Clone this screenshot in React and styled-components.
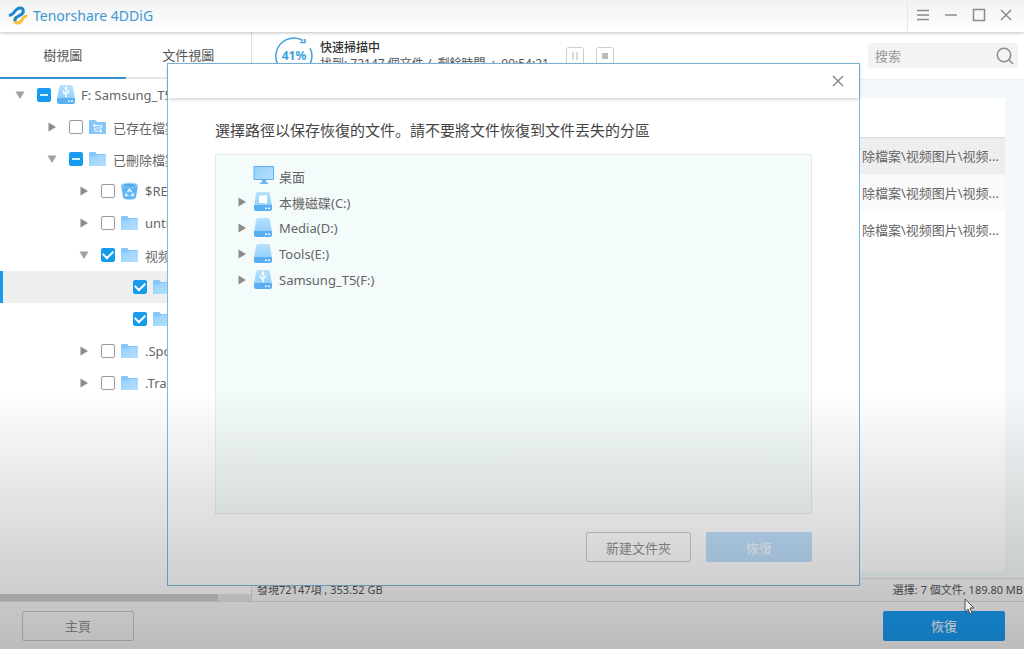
// App.jsx
import React from 'react';
import styled, { createGlobalStyle } from 'styled-components';

const GlobalStyle = createGlobalStyle`
  * {
    box-sizing: border-box;
  }

  body {
    margin: 0;
    overflow: hidden;
    background: #fff;
  }

  body, button, input, table {
    font-family: 'Noto Sans', 'Noto Sans CJK SC', 'Noto Sans CJK TC', sans-serif;
    font-size: 13px;
    color: #666;
  }

  button {
    cursor: pointer;
  }
`;

const Window = styled.div`
  display: grid;
  grid-template-columns: 252px 1fr;
  grid-template-rows: 32px 1fr 48px;
  height: 100vh;
`;

const TitleBar = styled.header`
  grid-column: 1 / -1;
  display: flex;
  align-items: center;
  justify-content: space-between;
  padding-left: 8px;
  background: linear-gradient(#f2f2f2, #fff);
  box-shadow: 0 1px 3px rgba(0, 0, 0, 0.25);
  z-index: 1;
`;

const Brand = styled.div`
  display: flex;
  align-items: center;
  gap: 5px;
  font-size: 14px;
  line-height: 30px;
  color: #3d97d3;
`;

const WindowControls = styled.div`
  display: flex;
  align-items: center;
  gap: 14px;
  height: 32px;
  padding: 0 12px 2px 8px;
  border-left: 1px solid #e8e8e8;
`;

const IconButton = styled.button`
  display: flex;
  padding: 0;
  border: 0;
  background: none;
`;

const Sidebar = styled.aside`
  display: flex;
  flex-direction: column;
  min-width: 0;
  border-right: 1px solid #ddd;
`;

const Tabs = styled.nav`
  display: flex;
`;

const Tab = styled.button`
  flex: 1;
  height: 47px;
  padding: 0;
  border: 0;
  border-bottom: 2px solid ${props => (props.$active ? '#3592d0' : '#e6e6e6')};
  background: none;
  color: #555;
`;

const Tree = styled.ul`
  flex: 1;
  margin: 0;
  padding: 0;
  list-style: none;
  overflow: hidden;
`;

const TreeRow = styled.li`
  display: flex;
  align-items: center;
  height: 32px;
  padding-left: ${props => props.$level * 32 + 12}px;
  border-left: 3px solid ${props => (props.$selected ? '#169bee' : 'transparent')};
  background: ${props => (props.$selected ? '#efefef' : 'none')};
`;

const ArrowButton = styled(IconButton)`
  width: 10px;
  margin-right: 12px;
  visibility: ${props => (props.$hidden ? 'hidden' : 'visible')};
`;

const NodeLabel = styled.label`
  display: flex;
  align-items: center;
  gap: 5px;
  white-space: nowrap;
`;

const Checkbox = styled.input`
  appearance: none;
  display: grid;
  place-items: center;
  width: 14px;
  height: 14px;
  margin: 0;
  border: 1px solid #999;
  border-radius: 2px;
  background: #fff;

  &:checked, &:indeterminate {
    border-color: #169bee;
    background: #169bee;
  }

  &:checked::after {
    content: '';
    width: 8px;
    height: 5px;
    margin-bottom: 3px;
    border: solid #fff;
    border-width: 0 0 2px 2px;
    transform: rotate(-45deg);
  }

  &:indeterminate::after {
    content: '';
    width: 8px;
    height: 2px;
    background: #d8effd;
  }
`;

const ScrollTrack = styled.div`
  height: 7px;
  background: #e8e8e8;
`;

const ScrollThumb = styled.div`
  width: 87%;
  height: 100%;
  background: #cecece;
`;

const Main = styled.main`
  display: flex;
  flex-direction: column;
  min-width: 0;
`;

const ScanBar = styled.div`
  display: flex;
  align-items: center;
  height: 48px;
  padding: 0 6px 0 22px;
  border-bottom: 1px solid #eee;
`;

const ScanText = styled.div`
  width: 232px;
  margin-left: 7px;
  padding-top: 1px;
  font-size: 12px;
  line-height: 16px;
  white-space: nowrap;
  color: #555;
`;

const ScanTitle = styled.div`
  font-weight: 500;
  color: #333;
`;

const ScanActions = styled.div`
  display: flex;
  gap: 12px;
  margin-left: 14px;
`;

const SearchBox = styled.label`
  display: flex;
  align-items: center;
  width: 150px;
  height: 25px;
  margin-left: auto;
  padding: 0 4px 0 7px;
  border-radius: 3px;
  background: #f3f3f3;
`;

const SearchInput = styled.input`
  flex: 1;
  min-width: 0;
  padding: 0;
  border: 0;
  outline: 0;
  background: none;

  &::placeholder {
    color: #999;
    opacity: 1;
  }
`;

const Content = styled.section`
  flex: 1;
  display: flex;
  padding: 18px 19px 7px;
  background: #f3f9fa;
`;

const FileCard = styled.div`
  flex: 1;
  background: #fff;
  border-radius: 2px;
`;

const FileTable = styled.table`
  width: 100%;
  border-collapse: collapse;
`;

const HeadCell = styled.th`
  height: 39px;
  padding: 0;
  border-bottom: 1px solid #ddd;
`;

const FileRow = styled.tr`
  background: ${props => props.$bg};
`;

const PathCell = styled.td`
  height: 37px;
  padding: 0 6px;
  text-align: right;
`;

const StatusBar = styled.div`
  display: flex;
  justify-content: space-between;
  padding: 0 1px 0 5px;
  border-top: 1px solid #e4e4e4;
  background: #f8f8f8;
  font-size: 11px;
  line-height: 22px;
  color: #555;
`;

const Footer = styled.footer`
  grid-column: 1 / -1;
  display: flex;
  align-items: center;
  justify-content: space-between;
  padding: 0 19px 0 22px;
  border-top: 1px solid #e0e0e0;
  background: #fbfbfb;
`;

const Button = styled.button`
  width: ${props => props.$width}px;
  height: 30px;
  padding: 0;
  border: 1px solid #ccc;
  border-radius: 2px;
  background: none;
  color: #909090;
`;

const PrimaryButton = styled(Button)`
  border: 0;
  background: #1b9ff8;
  color: #fff;

  &:disabled {
    background: #bfe0fd;
    color: #f4f9fd;
  }
`;

const Backdrop = styled.div`
  position: fixed;
  inset: 0;
  display: grid;
  place-items: center;
  padding-left: 3px;
  z-index: 2;
`;

const Dialog = styled.div`
  width: 100%;
  max-width: 693px;
  border: 1px solid #7fb9df;
  background: #fff;
`;

const DialogHeader = styled.div`
  display: flex;
  align-items: center;
  justify-content: flex-end;
  height: 34px;
  padding: 0 15px;
  box-shadow: 0 1px 4px rgba(0, 0, 0, 0.22);
`;

const DialogBody = styled.div`
  padding: 20px 47px 23px;
`;

const Message = styled.p`
  margin: 0 0 12px;
  font-size: 15px;
  line-height: 24px;
  color: #444;
`;

const DriveList = styled.ul`
  height: 360px;
  margin: 0;
  padding: 8px 21px;
  border: 1px solid #e3ebec;
  background: #f4fbfb;
  list-style: none;
`;

const DriveRow = styled.li`
  display: flex;
  align-items: center;
  gap: 6px;
  height: 26px;

  ${ArrowButton} {
    margin: 0;
  }
`;

const DialogActions = styled.div`
  display: flex;
  justify-content: flex-end;
  gap: 15px;
  margin-top: 18px;
`;

const Shade = styled.div`
  position: fixed;
  inset: 60% 0 0;
  background: linear-gradient(rgba(0, 0, 0, 0), rgba(0, 0, 0, 0.25));
  pointer-events: none;
  z-index: 3;
`;

const Pointer = styled.svg`
  position: fixed;
  right: 48px;
  bottom: 33px;
  z-index: 4;
`;

const Logo = () => (
  <svg width="20" height="20" viewBox="0 0 20 20" fill="none" strokeWidth="3">
    <path d="M8 11c-3 3-1 6 2 6 4 0 4-5 6-6q2-1 3-1" stroke="#f6bf35" />
    <path d="M1 9.500c2-.5 3-1 4-2C7 5 9 2 12 2c4 0 4 4 2 6l-5 3c-2 1-2 2-2 4" stroke="#1b86d2" />
  </svg>
);

const Arrow = ({ open }) => (
  <svg width="10" height="10" viewBox="0 0 10 10" fill={open ? '#a0a0a0' : '#8c8c8c'}>
    <path d={open ? 'M0.500 1.500h9L5 9z' : 'M1.500 0.500v9L9 5z'} />
  </svg>
);

const CloseIcon = () => (
  <svg width="12" height="12" viewBox="0 0 12 12" stroke="#8c8c8c" strokeWidth="1.500">
    <path d="M1 1l10 10M11 1L1 11" />
  </svg>
);

const Folder = ({ linked }) => (
  <svg width="20" height="20" viewBox="0 0 20 20" fill="none">
    <path d="M1 4q0-1 1-1h5l2 2h8q1 0 1 1v11H1z" fill="#84c6f8" />
    <path d="M1 7h6l2-1h9v10q0 1-1 1H2q-1 0-1-1z" fill={linked ? '#84c6f8' : 'url(#folderFill)'} />
    {linked && (
      <path d="M6 8.500h6.500a1.200 1.200 0 0 1 0 2.500H8a1.500 1.500 0 0 0 0 3h5.500M7 7L5.500 8.500 7 10M12 12.500l1.500 1.500-1.500 1.500" stroke="#eaf6ff" strokeWidth="1.200" />
    )}
  </svg>
);

const Bin = () => (
  <svg width="20" height="20" viewBox="0 0 20 20" fill="none">
    <path d="M1 4l2 12q.3 1.500 2 2 4.500 1 9 0 1.700-.5 2-2l2-12z" fill="#62b5f4" />
    <ellipse cx="9.500" cy="4" rx="8.500" ry="2.500" fill="#a5d8fc" />
    <ellipse cx="9.500" cy="4.300" rx="6.800" ry="1.600" fill="#52a9ec" />
    <path d="M7.500 11l2-2.500 2 2.500M12.500 12l.8 2.500h-2.800M8.500 14.500H5.700l.8-2.500" stroke="#eaf6ff" strokeWidth="1.500" />
  </svg>
);

const Drive = ({ mark }) => (
  <svg width="20" height="20" viewBox="0 0 20 20" fill="none">
    <path d="M5 0h10q1.500 0 1.800 1.500L19 14H1L3.200 1.500Q3.500 0 5 0z" fill="url(#driveFill)" />
    <path d="M1 13.500q0-.5.5-.5h17q.5 0 .5.500V17q0 2-2 2H3q-2 0-2-2z" fill="#5aaff2" />
    <path d="M12 15.500h2v1.500h-2zM15 15.500h2v1.500h-2z" fill="#e9f6ff" />
    {mark === 'windows' && <path d="M6 4l8-1v8.500L6 11z" fill="#fff" />}
    {mark === 'usb' && (
      <path d="M10 12V3M8.800 4L10 2l1.200 2M7.500 5.500v2L10 9.500M12.500 5v2L10 9M9 11.500h2" stroke="#fff" strokeWidth="1.200" />
    )}
  </svg>
);

const Desktop = () => (
  <svg width="20" height="20" viewBox="0 0 20 20" overflow="visible">
    <rect x="0.500" y="0" width="20.500" height="14" rx="1" fill="#5db0f2" />
    <path d="M1.500 1h18.500v12H1.500z" fill="url(#folderFill)" />
    <path d="M9 14h4v2.500h2V18H7v-1.500h2z" fill="#67b7f5" />
  </svg>
);

const icons = {
  usb: <Drive mark="usb" />,
  windows: <Drive mark="windows" />,
  drive: <Drive />,
  linked: <Folder linked />,
  folder: <Folder />,
  bin: <Bin />,
  desktop: <Desktop />,
};

const nodes = [
  { level: 0, arrow: 'open', check: 'partial', icon: 'usb', name: 'F: Samsung_T5' },
  { level: 1, arrow: 'closed', icon: 'linked', name: '已存在檔案' },
  { level: 1, arrow: 'open', check: 'partial', icon: 'folder', name: '已刪除檔案' },
  { level: 2, arrow: 'closed', icon: 'bin', name: '$RECYCLE' },
  { level: 2, arrow: 'closed', icon: 'folder', name: 'untitled' },
  { level: 2, arrow: 'open', check: 'full', icon: 'folder', name: '视频图片' },
  { level: 3, check: 'full', icon: 'folder', name: '视频', selected: true },
  { level: 3, check: 'full', icon: 'folder', name: '图片' },
  { level: 2, arrow: 'closed', icon: 'folder', name: '.Spotlight' },
  { level: 2, arrow: 'closed', icon: 'folder', name: '.Trashes' },
];

const drives = [
  { icon: 'desktop', name: '桌面' },
  { arrow: true, icon: 'windows', name: '本機磁碟(C:)' },
  { arrow: true, icon: 'drive', name: 'Media(D:)' },
  { arrow: true, icon: 'drive', name: 'Tools(E:)' },
  { arrow: true, icon: 'usb', name: 'Samsung_T5(F:)' },
];

const rowColors = ['#eee', '#fafafa', '#fff'];

const TreeNode = ({ node }) => (
  <TreeRow $level={node.level} $selected={node.selected}>
    <ArrowButton $hidden={!node.arrow} aria-label={node.name}>
      <Arrow open={node.arrow === 'open'} />
    </ArrowButton>
    <NodeLabel>
      <Checkbox
        type="checkbox"
        defaultChecked={node.check === 'full'}
        ref={el => {
          if (el) el.indeterminate = node.check === 'partial';
        }}
      />
      {icons[node.icon]}
      {node.name}
    </NodeLabel>
  </TreeRow>
);

const SaveDialog = () => (
  <Backdrop>
    <Dialog role="dialog" aria-labelledby="save-message">
      <DialogHeader>
        <IconButton aria-label="關閉"><CloseIcon /></IconButton>
      </DialogHeader>
      <DialogBody>
        <Message id="save-message">選擇路徑以保存恢復的文件。請不要將文件恢復到文件丟失的分區</Message>
        <DriveList>
          {drives.map(drive => (
            <DriveRow key={drive.name}>
              <ArrowButton $hidden={!drive.arrow} aria-label={drive.name}><Arrow /></ArrowButton>
              {icons[drive.icon]}
              {drive.name}
            </DriveRow>
          ))}
        </DriveList>
        <DialogActions>
          <Button $width={105}>新建文件夾</Button>
          <PrimaryButton $width={106} disabled>恢復</PrimaryButton>
        </DialogActions>
      </DialogBody>
    </Dialog>
  </Backdrop>
);

const App = () => (
  <>
    <GlobalStyle />
    {/* Gradients shared by the folder and drive icons */}
    <svg width="0" height="0" style={{ position: 'absolute' }}>
      <defs>
        <linearGradient id="folderFill" x1="0" y1="0" x2="1" y2="1">
          <stop offset="0" stopColor="#94d0fb" />
          <stop offset="1" stopColor="#b6e0fd" />
        </linearGradient>
        <linearGradient id="driveFill" x1="0" y1="0" x2="0" y2="1">
          <stop offset="0" stopColor="#b8e1fd" />
          <stop offset="1" stopColor="#92d0fb" />
        </linearGradient>
      </defs>
    </svg>
    <Window>
      <TitleBar>
        <Brand><Logo />Tenorshare 4DDiG</Brand>
        <WindowControls>
          <IconButton aria-label="選單">
            <svg width="14" height="14" viewBox="0 0 14 14" stroke="#8c8c8c" strokeWidth="1.500">
              <path d="M1 2.500h12M1 7h12M1 11.500h12" />
            </svg>
          </IconButton>
          <IconButton aria-label="最小化">
            <svg width="14" height="14" viewBox="0 0 14 14" stroke="#8c8c8c" strokeWidth="1.500">
              <path d="M1 7h12" />
            </svg>
          </IconButton>
          <IconButton aria-label="最大化">
            <svg width="14" height="14" viewBox="0 0 14 14" fill="none" stroke="#8c8c8c" strokeWidth="1.500">
              <path d="M1.500 1.500h11v11h-11z" />
            </svg>
          </IconButton>
          <IconButton aria-label="關閉"><CloseIcon /></IconButton>
        </WindowControls>
      </TitleBar>

      <Sidebar>
        <Tabs>
          <Tab $active>樹視圖</Tab>
          <Tab>文件視圖</Tab>
        </Tabs>
        <Tree>
          {nodes.map(node => <TreeNode key={node.name} node={node} />)}
        </Tree>
        <ScrollTrack><ScrollThumb /></ScrollTrack>
      </Sidebar>

      <Main>
        <ScanBar>
          <svg width="39" height="39" viewBox="0 0 39 39" fill="none" stroke="#3d9fe0" strokeWidth="1.500">
            <path d="M29 4.500A18 18 0 1 0 36 12" />
            <path d="M26 6.500h5V3" />
            <text x="20" y="24" textAnchor="middle" fontSize="12" fontWeight="700" fill="#3d9fe0" stroke="none">41%</text>
          </svg>
          <ScanText>
            <ScanTitle>快速掃描中</ScanTitle>
            找到: 72147 個文件 /&nbsp; 剩餘時間&nbsp; :&nbsp; 00:54:21
          </ScanText>
          <ScanActions>
            <IconButton aria-label="暫停">
              <svg width="18" height="18" viewBox="0 0 18 18" fill="none" stroke="#ccc">
                <rect x="0.500" y="0.500" width="17" height="17" rx="2" />
                <path d="M7 5v8M11 5v8" strokeWidth="1.500" />
              </svg>
            </IconButton>
            <IconButton aria-label="停止">
              <svg width="18" height="18" viewBox="0 0 18 18" fill="none" stroke="#ccc">
                <rect x="0.500" y="0.500" width="17" height="17" rx="2" />
                <path d="M6 6h6v6H6z" fill="#bbb" stroke="none" />
              </svg>
            </IconButton>
          </ScanActions>
          <SearchBox>
            <SearchInput type="search" placeholder="搜索" aria-label="搜索" />
            <svg width="18" height="18" viewBox="0 0 18 18" fill="none" stroke="#8c8c8c" strokeWidth="1.500">
              <circle cx="8" cy="8" r="6.700" />
              <path d="M13 13l4 4" />
            </svg>
          </SearchBox>
        </ScanBar>

        <Content>
          <FileCard>
            <FileTable>
              <thead>
                <tr><HeadCell aria-label="路徑" /></tr>
              </thead>
              <tbody>
                {rowColors.map(color => (
                  <FileRow key={color} $bg={color}>
                    <PathCell>除檔案\视频图片\视频...</PathCell>
                  </FileRow>
                ))}
              </tbody>
            </FileTable>
          </FileCard>
        </Content>

        <StatusBar>
          <span>發現72147項 , 353.52 GB</span>
          <span>選擇: 7 個文件, 189.80 MB</span>
        </StatusBar>
      </Main>

      <Footer>
        <Button $width={112}>主頁</Button>
        <PrimaryButton $width={122}>恢復</PrimaryButton>
      </Footer>
    </Window>

    <SaveDialog />
    <Shade />
    <Pointer width="12" height="18" viewBox="0 0 12 18" fill="#eee" stroke="#555">
      <path d="M1 1v13l3-3 2 5 2-1-2-5h4z" />
    </Pointer>
  </>
);

export default App;
